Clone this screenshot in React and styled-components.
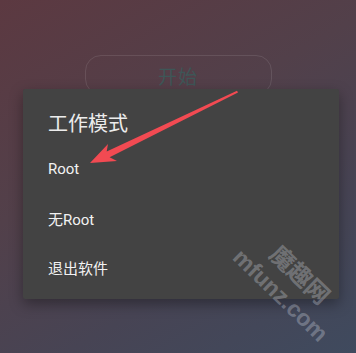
import styled, { createGlobalStyle } from "styled-components";

const GlobalStyle = createGlobalStyle`
    html, body {
        margin: 0;
        padding: 0;
    }
    body {
        font-family: Roboto, "Noto Sans CJK SC", sans-serif;
    }
`;

const modes = ["Root", "无Root", "退出软件"];

export default function App() {
    return (
        <Screen>
            <GlobalStyle />
            <StartButton>开始</StartButton>

            <Dialog>
                <Title>工作模式</Title>
                {modes.map((m) => (
                    <Item key={m}>{m}</Item>
                ))}
            </Dialog>

            <Arrow width="356" height="353" viewBox="0 0 356 353">
                <polygon
                    points="90,163 108,144 106.7,151.4 237,90.8 238,92.6 109.6,157.2 117,161"
                    fill="#f24a52"
                />
            </Arrow>

            <Watermark>
                <span className="cn">魔趣网</span>
                <span className="en">mfunz.com</span>
            </Watermark>
        </Screen>
    );
}

const Screen = styled.div`
    position: relative;
    width: 356px;
    height: 353px;
    overflow: hidden;
    background: linear-gradient(150deg, #5c3941 0%, #52404a 40%, #474454 70%, #3f4a5e 100%);
    display: flex;
    flex-direction: column;
    align-items: center;
    padding-top: 55px;
    box-sizing: border-box;
`;

const StartButton = styled.div`
    width: 187px;
    height: 40px;
    box-sizing: border-box;
    border: 1.5px solid rgba(255, 255, 255, 0.1);
    border-radius: 16px;
    display: flex;
    align-items: center;
    justify-content: center;
    font-family: "Noto Sans CJK SC", sans-serif;
    font-size: 19px;
    color: #3e5657;
    letter-spacing: 1px;
`;

const Dialog = styled.div`
    position: absolute;
    left: 23px;
    top: 89px;
    width: 316px;
    height: 210px;
    box-sizing: border-box;
    background: #434343;
    border-radius: 2px;
    box-shadow: 0 5px 14px rgba(0, 0, 0, 0.35);
    padding: 22px 0 7px 25px;
    display: flex;
    flex-direction: column;
`;

const Title = styled.div`
    font-family: "Noto Sans CJK SC", sans-serif;
    font-size: 20px;
    line-height: 24px;
    color: #ececec;
    margin-bottom: 9.5px;
`;

const Item = styled.div`
    height: 49px;
    display: flex;
    align-items: center;
    font-family: Roboto, "Noto Sans CJK SC", sans-serif;
    font-size: 15px;
    color: #f2f2f2;
`;

const Arrow = styled.svg`
    position: absolute;
    left: 0;
    top: 0;
    pointer-events: none;
`;

const Watermark = styled.div`
    position: absolute;
    left: 0;
    top: 0;
    width: 356px;
    height: 353px;
    pointer-events: none;
    font-weight: bold;
    color: rgba(225, 230, 240, 0.3);

    span {
        position: absolute;
        white-space: nowrap;
        transform-origin: left center;
        transform: rotate(44deg);
    }
    .cn {
        left: 275px;
        top: 236px;
        font-family: "Noto Sans CJK SC", sans-serif;
        font-size: 24px;
        line-height: 26px;
    }
    .en {
        left: 237px;
        top: 241px;
        font-family: "Liberation Sans", sans-serif;
        font-size: 23px;
        line-height: 24px;
    }
`;
